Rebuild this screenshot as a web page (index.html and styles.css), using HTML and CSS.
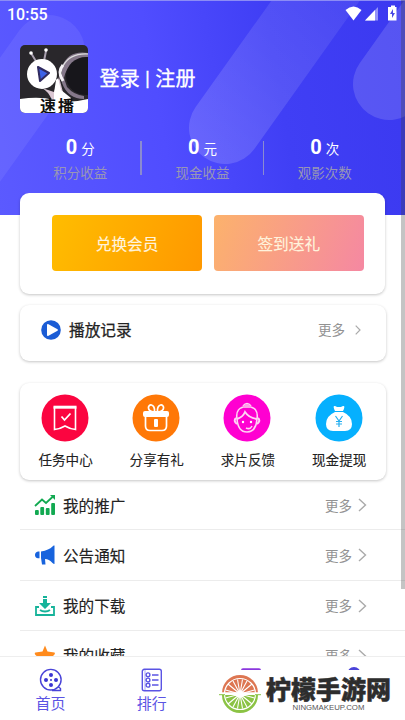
FILE: index.html
```html
<!DOCTYPE html>
<html lang="zh-CN">
<head>
<meta charset="utf-8">
<title>速播</title>
<link rel="stylesheet" href="styles.css">
</head>
<body>
<div class="app">
  <header class="hero">
    <svg class="hero-art" width="405" height="216" viewBox="0 0 405 216">
      <defs>
        <linearGradient id="band" gradientUnits="userSpaceOnUse" x1="190" y1="160" x2="340" y2="0"><stop offset="0" stop-color="#fff" stop-opacity=".16"/><stop offset="1" stop-color="#fff" stop-opacity=".07"/></linearGradient>
      </defs>
      <g fill="none" stroke-width="72" stroke-linecap="round">
        <path d="M49 51L-50 190" stroke="#fff" stroke-opacity=".07"/>
        <path d="M225 128L346 -42" stroke="url(#band)"/>
        <path d="M389 84L480 -44" stroke="#fff" stroke-opacity=".14"/>
      </g>
      <path d="M0 .5H405" stroke="#8c8cf5"/>
    </svg>
    <div class="status">
      <span>10:55</span>
      <svg width="54" height="18" viewBox="0 0 54 18">
        <path d="M.5 5Q8.500-2 16.500 5L8.500 15.500Z" fill="#fff"/>
        <path d="M20 15.500L33 2V15.500Z" fill="#fff" opacity=".45"/><path d="M20 15.500L30 5V15.500Z" fill="#fff"/>
        <path d="M44 2h2V.5h4V2h1.500V15.500H43V2Z" fill="#fff"/><path d="M48 4l-3 5h2v4l3-5h-2z" fill="#4a49e4"/>
      </svg>
    </div>
    <div class="profile">
      <div class="avatar">
        <svg width="68" height="68" viewBox="0 0 68 68">
          <rect width="68" height="68" fill="#29272b"/>
          <path d="M22 43L34 47L39 32L45 55H32Q28 46 22 43" fill="#d9c6d2"/>
          <path d="M34 48L36 35Q38 31 39 37L41 45L51 53V56H34Z" fill="#fff"/>
          <path d="M42 22Q48 5 68 8V14Q48 14 44 33L47 42Q54 50 64 51V54Q48 54 42 38Z" fill="#85788a"/>
          <path d="M43 21Q50 8 68 9" fill="none" stroke="#ddd" stroke-width="1.200"/>
          <ellipse cx="66" cy="31" rx="20" ry="19" fill="#17161b"/>
          <path d="M43 20Q37 27 43 36" fill="none" stroke="#f5f2f5" stroke-width="3"/>
          <path d="M17 18L11 8M24 16L26 6" stroke="#a89fae" stroke-width="2"/><circle cx="11" cy="8" r="1.800" fill="#fff"/><circle cx="26" cy="5" r="1.800" fill="#fff"/>
          <circle cx="22" cy="29" r="15" fill="#fff"/>
          <path d="M18 22L29 28L20 36Z" fill="#3d62e8" stroke="#302b60" stroke-width="2" stroke-linejoin="round"/>
          <path d="M0 54Q20 51 34 55T68 54V68H0Z" fill="#fff"/>
        </svg>
        <b class="avatar-name">速播</b>
      </div>
      <div class="login">登录 | 注册</div>
    </div>
    <div class="stats">
      <div class="stat"><div class="amount"><b>0</b>分</div><div class="caption">积分收益</div></div>
      <div class="stat"><div class="amount"><b>0</b>元</div><div class="caption">现金收益</div></div>
      <div class="stat"><div class="amount"><b>0</b>次</div><div class="caption">观影次数</div></div>
    </div>
  </header>

  <main class="content">
    <section class="card actions">
      <div class="btn vip">兑换会员</div>
      <div class="btn sign">签到送礼</div>
    </section>
    <section class="card history">
      <svg width="20" height="20" viewBox="0 0 20 20"><circle cx="10" cy="10" r="9.800" fill="#1b5cd5"/><path d="M6 5Q6 3.500 7.500 4.200L16.500 9.200Q17.500 10 16.500 10.800L7.500 15.800Q6 16.500 6 15Z" fill="#fff"/></svg>
      <span class="history-title">播放记录</span>
      <span class="more">更多</span>
      <svg class="small-arrow" width="6" height="10" viewBox="0 0 6 10"><path d="M.7 .7L5 5L.7 9.300" fill="none" stroke="#aaa" stroke-width="1.200"/></svg>
    </section>
    <section class="card services">
      <div class="service">
        <svg width="48" height="48" viewBox="0 0 48 48"><circle cx="24" cy="24" r="23.500" fill="#fb0540"/><g fill="none" stroke="#fff" stroke-width="1.600"><path d="M13.500 12.500V35.500Q19 35 24 32Q29 35 34.500 35.500V12.500"/><path d="M12.500 13.200H35.500" stroke-width="3"/><path d="M20.500 22.500L23.500 26L29.500 19.500" stroke-width="1.800"/></g></svg>
        <span>任务中心</span>
      </div>
      <div class="service">
        <svg width="48" height="48" viewBox="0 0 48 48"><circle cx="24" cy="24" r="23.500" fill="#ff7807"/><g fill="none" stroke="#fff" stroke-width="1.700"><path d="M22 18C14 17 16 10 19.500 11Q23 12 22.500 18M26 18C34 17 32 10 28.500 11Q25 12 25.500 18"/><path d="M13.500 22V32Q13.500 36.500 18 36.500H30Q34.500 36.500 34.500 32V22"/></g><rect x="11" y="17" width="26" height="6" rx="2" fill="#fff"/><rect x="22" y="25" width="4" height="8" rx="1" fill="#fff"/></svg>
        <span>分享有礼</span>
      </div>
      <div class="service">
        <svg width="48" height="48" viewBox="0 0 48 48"><circle cx="24" cy="24" r="23.500" fill="#ff00d1"/><g fill="none" stroke="#ffd4f4" stroke-width="1.600"><path d="M20 12Q24 7 28 12M14 25Q12 13 24 12.500Q36 13 34 25Q33 38 24 38Q15 38 14 25Z"/><path d="M14 25Q20 23 22 18Q26 24 34 25" stroke-width="1.900"/><path d="M13 24Q10 27 14 30M35 24Q38 27 34 30" stroke-width="2"/><path d="M23 34Q27 36 29 32"/></g><path d="M20 12Q24 8 28 12V14H20Z" fill="#ffa1e9"/><circle cx="20" cy="28" r="1.200" fill="#fff"/><circle cx="28" cy="28" r="1.200" fill="#fff"/></svg>
        <span>求片反馈</span>
      </div>
      <div class="service">
        <svg width="48" height="48" viewBox="0 0 48 48"><circle cx="24" cy="24" r="23.500" fill="#06b0fe"/><path d="M19 12Q21 12 22 13H26Q27 12 29 12Q30 13 28 17H20Q18 13 19 12Z" fill="#fff"/><path d="M20 18H28Q37 22 37 30Q37 37 30 37H18Q11 37 11 30Q11 22 20 18Z" fill="#fff"/><path d="M20.500 22L24 27L27.500 22M24 27V33M21 27.500H27M21 30H27" fill="none" stroke="#26aff0" stroke-width="1.200"/></svg>
        <span>现金提现</span>
      </div>
    </section>
    <section class="list">
      <div class="row">
        <svg class="row-icon" width="22" height="22" viewBox="0 0 22 22"><g fill="#12a951"><rect x="1" y="16" width="3.800" height="5" rx="1"/><rect x="6.300" y="13" width="3.800" height="8" rx="1"/><rect x="11.800" y="14" width="3.800" height="7" rx="1"/><rect x="17.200" y="9" width="3.800" height="12" rx="1"/><path d="M16 1H21V6Z"/></g><path d="M1 12L8 5.500L12 9L19 2.500" fill="none" stroke="#12a951" stroke-width="1.800"/></svg>
        <span class="row-title">我的推广</span><span class="more">更多</span>
        <svg class="arrow" width="9" height="14" viewBox="0 0 9 14"><path d="M1 1L7.500 7L1 13" fill="none" stroke="#aaa" stroke-width="1.400"/></svg>
      </div>
      <div class="row">
        <svg class="row-icon" width="22" height="22" viewBox="0 0 22 22"><path d="M7 7.500Q15 6 18.500 2.500Q19.500 1 20.500 1.500V20Q19.500 20 18.500 19Q15 15 11 15L11.500 20.500H8L7 14Z" fill="#1763dd"/><path d="M5.500 7.500V14.200H4Q1 14 1 11Q1 8 4 7.500Z" fill="#1763dd"/></svg>
        <span class="row-title">公告通知</span><span class="more">更多</span>
        <svg class="arrow" width="9" height="14" viewBox="0 0 9 14"><path d="M1 1L7.500 7L1 13" fill="none" stroke="#aaa" stroke-width="1.400"/></svg>
      </div>
      <div class="row">
        <svg class="row-icon" width="22" height="22" viewBox="0 0 22 22"><path d="M9 1H13V3H9ZM9 4H13V8H17L11 14L5 8H9Z" fill="#16b39a"/><path d="M5 12H2V20H20V12H17M6 15Q8 16.500 11 16.500T16 15" fill="none" stroke="#16b39a" stroke-width="1.800"/></svg>
        <span class="row-title">我的下载</span><span class="more">更多</span>
        <svg class="arrow" width="9" height="14" viewBox="0 0 9 14"><path d="M1 1L7.500 7L1 13" fill="none" stroke="#aaa" stroke-width="1.400"/></svg>
      </div>
      <div class="row">
        <svg class="row-icon" width="22" height="22" viewBox="0 0 22 22"><path d="M11 .5L13.500 6.500L20.500 7.500Q21.500 8.500 20 10L16 14L17 21L11 18L5 21L6 14L1.500 10Q0 8 1.500 7.500L8.500 6.500Z" fill="#ff8b1d"/></svg>
        <span class="row-title">我的收藏</span><span class="more">更多</span>
        <svg class="arrow" width="9" height="14" viewBox="0 0 9 14"><path d="M1 1L7.500 7L1 13" fill="none" stroke="#aaa" stroke-width="1.400"/></svg>
      </div>
    </section>
  </main>

  <nav class="tabs">
    <div class="tab">
      <svg width="24" height="24" viewBox="0 0 24 24"><g fill="none" stroke="#4943d8" stroke-width="1.400"><circle cx="11.800" cy="11.700" r="10.300"/><path d="M13 22.500H21.500V20.500L19 18.500"/></g><g fill="#3b35d2"><circle cx="12" cy="7" r="2"/><circle cx="7" cy="12" r="2"/><circle cx="17" cy="12" r="2"/><circle cx="12" cy="17" r="2"/><circle cx="12" cy="12" r="1"/></g></svg>
      <span>首页</span>
    </div>
    <div class="tab">
      <svg width="24" height="24" viewBox="0 0 24 24"><g fill="none" stroke="#5b54e4" stroke-width="1.400"><rect x="2.300" y="1.300" width="19" height="21.500" rx="2"/><path d="M5 2V22" opacity=".35"/><circle cx="8" cy="6.800" r="1.900"/><circle cx="8" cy="12" r="1.900"/><circle cx="8" cy="17.200" r="1.900"/><path d="M12 7H18.500M12 12H18.500M12 17H18.500"/></g></svg>
      <span>排行</span>
    </div>
    <div class="tab"><svg width="24" height="24" viewBox="0 0 24 24"><rect x="0" y=".3" width="20" height="18" rx="2" fill="#8b37de"/></svg></div>
    <div class="tab tab-mine"><svg width="24" height="24" viewBox="0 0 24 24"><circle cx="12" cy="6.800" r="6.800" fill="#4a43d9"/></svg></div>
  </nav>

  <div class="brand">
    <svg width="42" height="38" viewBox="0 0 42 38">
      <path d="M3 18A18 18 0 0 1 39 18Z" fill="#dd7652"/><path d="M3 20A18 18 0 0 0 39 20Z" fill="#8bc344"/>
      <circle cx="21" cy="19" r="15.500" fill="none" stroke="#fff" stroke-width="1.200"/>
      <path d="M21 19L6.500 15M21 19L9 9M21 19L14 6M21 19L18.500 4.500M21 19L23.500 4.500M21 19L28 6M21 19L33 9M21 19L35.500 15M21 19L6.500 23M21 19L9 29M21 19L14 32M21 19L18.500 33.500M21 19L23.500 33.500M21 19L28 32M21 19L33 29M21 19L35.500 23" stroke="#fff" stroke-width="1.100"/>
      <path d="M0 18.200H42" stroke="#fff" stroke-width="1.800"/><path d="M0 19.700H6M36 19.700H42" stroke="#8bc344" stroke-width="1"/><circle cx="21" cy="19" r="2" fill="#fff"/>
    </svg>
    <div class="brand-text"><div class="brand-name">柠檬手游网</div><div class="brand-url">NINGMAKEUP.COM</div></div>
  </div>
  <div class="scrollbar"></div>
</div>
</body>
</html>
```
FILE: styles.css
```css
* { box-sizing: border-box; }
body { margin: 0; background: #fff; font-family: Roboto, "Noto Sans CJK SC", sans-serif; }
svg { display: block; flex: none; }
.app { position: relative; width: 405px; height: 720px; overflow: hidden; display: flex; flex-direction: column; white-space: nowrap; }
.hero { position: relative; flex: none; height: 215px; margin-bottom: -22px; background: linear-gradient(80deg, #5b5aff 0%, #504dff 40%, #403ff5 68%, #3b39f0 100%); color: #fff; overflow: hidden; }
.hero-art { position: absolute; left: 0; top: 0; }
.status { position: relative; display: flex; justify-content: space-between; align-items: center; height: 28px; padding: 1px 6px 0 7px; font-size: 16px; font-weight: 500; line-height: 28px; }
.status svg { margin-top: -2px; }
.profile { position: relative; display: flex; align-items: center; gap: 11.500px; height: 68px; margin: 17px 0 0 20px; }
.avatar { position: relative; width: 68px; height: 68px; border-radius: 5px; overflow: hidden; }
.avatar-name { position: absolute; left: 20px; top: 53px; font-size: 16px; line-height: 18px; letter-spacing: 2px; color: #111; }
.login { font-size: 20px; line-height: 26px; letter-spacing: .2px; -webkit-text-stroke: .3px #fff; }
.stats { position: relative; display: grid; grid-template-columns: repeat(3, 122.300px); margin: 22px 0 0 19px; text-align: center; }
.stat { position: relative; height: 50px; }
.stat + .stat::before { content: ""; position: absolute; left: -1px; top: 6px; width: 1.500px; height: 34px; background: #8b8bd0; }
.amount { font-size: 13.500px; line-height: 24px; }
.amount b { margin-right: 4px; font-size: 20px; }
.caption { margin-top: 2px; font-size: 13.500px; line-height: 20px; color: #9896b5; }

.content { position: relative; flex: none; width: 366px; height: 463px; margin-left: 20px; clip-path: inset(0 -20px 0 -4px); }
.card { background: #fff; border-radius: 9px; box-shadow: 0 1px 3px rgba(0, 0, 0, .23); }
.actions { display: flex; gap: 11.500px; width: 365px; height: 101px; padding: 22px 20px 23px 32px; }
.btn { width: 150.200px; height: 56px; border-radius: 4px; color: #fff3dd; font-size: 15.700px; line-height: 60px; text-align: center; -webkit-text-stroke: .15px #fff3dd; }
.vip { background: linear-gradient(110deg, #ffbd00, #ff9800); }
.sign { background: linear-gradient(110deg, #fcb26c, #f588a2); }
.history { display: flex; align-items: center; height: 56px; margin-top: 11px; padding: 0 25px 6px 21px; }
.history-title { margin: -1px 0 0 8px; font-size: 15.700px; color: #222; -webkit-text-stroke: .25px #222; }
.more { margin: -1px 0 0 auto; font-size: 13.500px; color: #929292; }
.history .more { margin-top: -2px; }
.small-arrow { margin-left: 10px; }
.services { display: grid; grid-template-columns: repeat(4, 91.200px); height: 97px; margin-top: 22px; padding-top: 11px; }
.service { display: flex; flex-direction: column; align-items: center; font-size: 13.600px; color: #222; }
.service svg { margin-left: -1px; }
.service span { margin-top: 8px; line-height: 20px; -webkit-text-stroke: .1px #222; }
.row { display: flex; align-items: center; height: 50.250px; margin-right: -19px; padding: 1px 38px 0 14px; border-bottom: 1px solid #ececec; }
.row-title { margin: -1px 0 0 7px; font-size: 15.600px; color: #222; -webkit-text-stroke: .15px #222; }
.arrow { margin-left: 6px; }

.tabs { display: grid; grid-template-columns: repeat(4, 101.200px); flex: none; height: 64px; background: #fff; border-top: 1px solid #eee; }
.tab { display: flex; flex-direction: column; align-items: center; padding-top: 11px; font-size: 15px; line-height: 20px; color: #5b54e4; }
.tab span { margin-top: 2px; }
.tab-mine { padding-top: 9.500px; }
.brand { position: absolute; left: 210px; top: 670px; display: flex; width: 195px; height: 50px; padding: 5px 0 0 9px; background: #fff; }
.brand-text { margin-left: 5px; width: 125px; text-align: center; }
.brand-name { margin-top: -2px; font-family: "Noto Sans CJK SC", sans-serif; font-size: 25px; font-weight: 900; line-height: 30px; color: #2d2d2d; -webkit-text-stroke: .5px #2d2d2d; }
.brand-url { font-family: "Liberation Sans", sans-serif; font-size: 7.800px; line-height: 10px; color: #555; }
.scrollbar { position: absolute; right: 0; top: 0; width: 4px; height: 589px; background: rgba(60, 60, 60, .3); }
```
